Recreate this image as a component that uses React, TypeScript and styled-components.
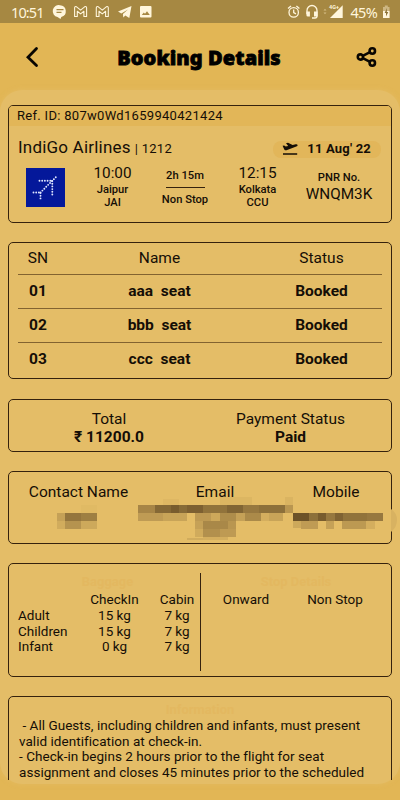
import React from "react";
import styled, { createGlobalStyle } from "styled-components";

const Global = createGlobalStyle`
  * { box-sizing: border-box; }
  body { margin: 0; background: #e2b655; }
`;

const Screen = styled.div`
  width: 400px;
  height: 800px;
  overflow: hidden;
  display: flex;
  flex-direction: column;
  background: #e2b655;
  color: #150e06;
  font-family: Roboto, "Noto Sans", sans-serif;
`;

const StatusBar = styled.div`
  height: 23px;
  flex: none;
  display: flex;
  justify-content: space-between;
  background: #a68842;
  color: #fff6dc;
`;

const Clock = styled.span<{ $spacing: number }>`
  font: 14.5px/25px "Noto Sans", sans-serif;
  letter-spacing: ${(p) => p.$spacing}px;
`;

const StatusGroup = styled.div<{ $left?: number; $right?: number; $gap: number }>`
  display: flex;
  gap: ${(p) => p.$gap}px;
  padding: 0 ${(p) => p.$right ?? 0}px 0 ${(p) => p.$left ?? 0}px;
`;

const Icon = styled.svg`
  display: block;
  flex: none;
`;

const Header = styled.header`
  height: 67px;
  flex: none;
  display: grid;
  grid-template-columns: 64px 1fr 66px;
  align-items: center;
  justify-items: center;
`;

const Title = styled.h1`
  margin: 0;
  padding-top: 2px;
  font: 900 20px/30px "Noto Sans", sans-serif;
  letter-spacing: 0.1px;
  color: #000;
  -webkit-text-stroke: 0.8px #000;
  white-space: nowrap;
`;

const Panel = styled.main`
  height: 694px;
  flex: none;
  padding: 15px 0 4px;
  border-radius: 22px;
  background: #e4bd67;
  box-shadow: 0 0 5px rgba(228, 189, 103, 0.7);
`;

const Scroll = styled.div`
  height: 675px;
  padding: 0 8px;
  overflow: hidden;
  display: flex;
  flex-direction: column;
`;

const Card = styled.section<{ $h: number; $gap?: number }>`
  position: relative;
  flex: none;
  height: ${(p) => p.$h}px;
  margin-bottom: ${(p) => p.$gap ?? 19}px;
  border: 1px solid #35220d;
  border-radius: 5px;
`;

const Text = styled.div<{ $size?: number; $bold?: number; $line?: number; $spacing?: number; $align?: string }>`
  font-size: ${(p) => p.$size ?? 15.5}px;
  font-weight: ${(p) => p.$bold ?? 400};
  line-height: ${(p) => p.$line ?? 18}px;
  letter-spacing: ${(p) => p.$spacing ?? 0}px;
  text-align: ${(p) => p.$align ?? "center"};
  white-space: pre;
`;

const Small = styled(Text)`
  font-size: 11.2px;
  font-weight: 500;
`;

const RefBand = styled.div`
  height: 20px;
  padding-left: 8px;
  background: #e2b658;
  border-radius: 4px 4px 0 0;
`;

const AirlineRow = styled.div`
  display: flex;
  justify-content: space-between;
  align-items: center;
  height: 20px;
  margin-top: 12px;
  padding: 0 10px 0 9px;
`;

const AirlineName = styled.div`
  display: flex;
  align-items: baseline;
  gap: 4px;
`;

const DateChip = styled.div`
  display: flex;
  align-items: center;
  gap: 8px;
  height: 17px;
  padding: 0 10px 0 9px;
  margin-top: 2px;
  border-radius: 8px;
  background: #e2b65a;
`;

const FlightRow = styled.div`
  display: grid;
  grid-template-columns: 56px 79px 66px 79px 84px;
  padding: 1px 0 0 8px;
`;

const LogoCell = styled.div`
  padding: 9px 0 0 8.6px;
`;

const Stack = styled.div<{ $top?: number }>`
  padding-top: ${(p) => p.$top ?? 0}px;
  display: flex;
  flex-direction: column;
  align-items: center;
`;

const DurationRule = styled.div`
  width: 39px;
  height: 1px;
  margin: 4px 0;
  background: #35220d;
`;

const Row = styled.div<{ $h: number; $ruled?: boolean }>`
  display: grid;
  grid-template-columns: 40px 203px 121px;
  align-items: center;
  height: ${(p) => p.$h}px;
  margin: 0 9px;
  padding-bottom: 1.5px;
  border-bottom: ${(p) => (p.$ruled ? "1px solid #826330" : "none")};
`;

const Split = styled.div<{ $cols: string; $top: number }>`
  display: grid;
  grid-template-columns: ${(p) => p.$cols};
  padding-top: ${(p) => p.$top}px;
`;

const Mosaic = styled.svg`
  position: absolute;
  left: -9px;
  top: 21px;
  overflow: visible;
`;

const Half = styled.div<{ $divider?: boolean }>`
  height: 98px;
  border-right: ${(p) => (p.$divider ? "1px solid #35220d" : "none")};
`;

const Faint = styled(Text)`
  color: #e3b860;
  font-weight: 700;
`;

const Grid = styled.div<{ $cols: string }>`
  display: grid;
  grid-template-columns: ${(p) => p.$cols};
`;

const BaggageTitle = styled.div`
  padding-left: 6px;
`;

const Info = styled.div`
  padding-left: 10px;
`;

const passengers = [
  ["01", "aaa  seat", "Booked"],
  ["02", "bbb  seat", "Booked"],
  ["03", "ccc  seat", "Booked"],
];

const baggage = [
  ["Adult", "15 kg", "7 kg"],
  ["Children", "15 kg", "7 kg"],
  ["Infant", "0 kg", "7 kg"],
];

const infoLines = [
  " - All Guests, including children and infants, must present",
  "valid identification at check-in.",
  "- Check-in begins 2 hours prior to the flight for seat",
  "assignment and closes 45 minutes prior to the scheduled",
];

// x, y, width, height, opacity of each redaction block
const blocks: number[][] = [
  [57, 20, 8, 8, 0.2], [65, 20, 16, 8, 0.52], [81, 20, 16, 8, 0.45], [81, 12, 16, 8, 0.02],
  [57, 28, 8, 8, 0.12], [65, 28, 16, 8, 0.3], [81, 28, 16, 8, 0.14],
  [138, 12, 17, 8, 0.4], [155, 12, 16, 8, 0.62], [171, 12, 8, 8, 0.7], [179, 12, 8, 8, 0.6],
  [187, 12, 16, 8, 0.67], [203, 12, 24, 8, 0.54], [227, 12, 16, 8, 0.64], [243, 12, 16, 8, 0.5],
  [259, 12, 26, 8, 0.56], [285, 12, 8, 8, 0.28], [163, 6, 16, 6, 0.04], [220, 4, 32, 8, 0.05], [285, 4, 8, 8, 0.06],
  [138, 20, 25, 8, 0.24], [163, 20, 24, 8, 0.18], [195, 20, 16, 8, 0.25], [211, 20, 9, 8, 0.15],
  [220, 20, 16, 8, 0.35], [236, 20, 9, 8, 0.2], [245, 20, 16, 8, 0.37], [261, 20, 8, 8, 0.1], [269, 20, 14, 8, 0.18],
  [195, 28, 8, 8, 0.2], [203, 28, 25, 8, 0.38], [228, 28, 8, 8, 0.28],
  [195, 36, 8, 8, 0.13], [203, 36, 17, 8, 0.32], [220, 36, 16, 8, 0.25], [187, 45, 16, 2, 0.12], [203, 44, 25, 3, 0.1],
  [293, 20, 16, 8, 0.78], [309, 20, 9, 8, 0.56], [318, 20, 8, 8, 0.7], [326, 20, 9, 8, 0.5],
  [335, 20, 8, 8, 0.65], [343, 20, 24, 8, 0.54], [367, 20, 16, 8, 0.5],
  [301, 28, 17, 8, 0.24], [326, 28, 8, 8, 0.2], [342, 28, 24, 8, 0.26], [293, 28, 8, 7, 0.14], [366, 28, 9, 8, 0.1],
];

const DotPlane = () => (
  <Icon width="39" height="39" viewBox="0 0 39 39">
    <rect width="39" height="39" fill="#04189a" />
    <g stroke="#dfe6ff" strokeWidth="1.9" strokeLinecap="round" strokeDasharray="0 2.7" fill="none">
      <path d="M13.5 12.8H27" />
      <path d="M14.5 24.5 31.5 7.5" />
      <path d="M26.3 13V27" />
      <path d="M7.5 24.5H15" />
      <path d="M14.5 25V32" />
    </g>
  </Icon>
);

const NotificationIcons = () => (
  <Icon width="112" height="23" viewBox="0 0 112 23">
    <g fill="#fff6dc">
      <path d="M13 5.2a6 6 0 0 1 1.3 11.8L13.5 19l-3-2A5.9 5.9 0 0 1 13 5.2z" />
      <path d="M71 11.5 84.5 6l-2.2 12-4-2.6-2 2-.4-3.3L81 9.5l-6.7 4.1z" />
      <path fillRule="evenodd" d="M94 6h9.5q1 0 1 1v9.5q0 1-1 1H94q-1 0-1-1V7q0-1 1-1zm.8 9h8l-2.8-3.8-2 2.5-1.2-1.3z" />
    </g>
    <path d="M9.5 9.7h7M9.5 12.3h5" stroke="#a68842" strokeWidth="1.2" />
    <g fill="none" stroke="#fff6dc" strokeWidth="1.1" strokeLinejoin="round">
      <path d="M27.6 16.5V8q0-2 2-1.2l4 3.3 4-3.3q2-.8 2 1.2v8.5h-2.7v-5.2l-3.3 2.6-3.3-2.6v5.2z" />
      <path d="M49.3 16.5V8q0-2 2-1.2l4 3.3 4-3.3q2-.8 2 1.2v8.5h-2.7v-5.2l-3.3 2.6-3.3-2.6v5.2z" />
    </g>
  </Icon>
);

const SystemIcons = () => (
  <Icon width="58" height="23" viewBox="288 0 58 23">
    <g fill="none" stroke="#fff6dc" strokeWidth="1.3">
      <circle cx="294.7" cy="12.4" r="4.7" />
      <path d="M294.7 9.5v3.2l2.3 1.2M289 8.5l3-2.5M300.4 8.5l-3-2.5" />
      <path d="M308 14v-3.5a5 5 0 0 1 10 0V16q0 2-2 2h-3" />
    </g>
    <path d="M307.4 11.5h3.5v5h-2q-1.5 0-1.5-1.5zM315 11.5h3.6v5H315zM331 18l12.7-12.7V18z" fill="#fff6dc" />
    <path d="M324.5 10.5 326 8.7l1.5 1.8zM324.5 12.5l1.5 1.8 1.5-1.8z" fill="#d3bc83" />
    <text x="330" y="9" fontSize="5.5" fontWeight="700" fontFamily="Roboto" fill="#fff6dc">4G+</text>
  </Icon>
);

const Battery = () => (
  <Icon width="9" height="23" viewBox="0 0 9 23">
    <path d="M2.8 5.5h3V7h1.7v4H1V7h1.8z" fill="#cdb783" />
    <path d="M1 11h6.6v7H1z" fill="#fff6dc" />
    <path d="M5 8 2.6 13H4v3.5L6.3 12H4.8z" fill="#8d7236" />
  </Icon>
);

const BackIcon = () => (
  <Icon width="14" height="22" viewBox="0 0 14 22">
    <path d="M11.5 2.5 3 11.2l8.5 8.3" fill="none" stroke="#090602" strokeWidth="2.8" strokeLinecap="round" />
  </Icon>
);

const ShareIcon = () => (
  <Icon width="22" height="22" viewBox="0 0 22 22">
    <g fill="none" stroke="#090602" strokeWidth="2.6">
      <circle cx="4.4" cy="11" r="2.6" />
      <circle cx="16.3" cy="5" r="2.7" />
      <circle cx="16.3" cy="17" r="2.7" />
      <path d="m6.8 9.8 7.2-3.6M6.8 12.2l7.2 3.6" />
    </g>
  </Icon>
);

const TakeoffIcon = () => (
  <Icon width="17" height="14" viewBox="0 0 17 14">
    <path d="M1 11.3h14.2v1.5H1zM.6 3.8 2.2 3.4l1.5 1.2 2.5-.5L4 1.2 6 .8l4.6 2.3 3.1-.9q1.6-.3 1.9.8.2 1.2-1.3 1.6L4.5 8.3Q3 8.6 2.3 7.4z" fill="#150e06" />
  </Icon>
);

export default function App() {
  return (
    <Screen>
      <Global />
      <StatusBar>
        <StatusGroup $left={11} $gap={3}>
          <Clock $spacing={-0.9}>10:51</Clock>
          <NotificationIcons />
        </StatusGroup>
        <StatusGroup $right={9} $gap={5}>
          <SystemIcons />
          <Clock $spacing={-0.7}>45%</Clock>
          <Battery />
        </StatusGroup>
      </StatusBar>
      <Header>
        <BackIcon />
        <Title>Booking Details</Title>
        <ShareIcon />
      </Header>
      <Panel>
        <Scroll>
          <Card $h={118}>
            <RefBand>
              <Text $size={13} $line={20} $spacing={0.3} $align="left">Ref. ID: 807w0Wd1659940421424</Text>
            </RefBand>
            <AirlineRow>
              <AirlineName>
                <Text $size={17} $spacing={0.2}>IndiGo Airlines</Text>
                <Text $size={13} $spacing={0.3}>| 1212</Text>
              </AirlineName>
              <DateChip>
                <TakeoffIcon />
                <Text $size={13} $bold={700} $spacing={0.2}>11 Aug' 22</Text>
              </DateChip>
            </AirlineRow>
            <FlightRow>
              <LogoCell><DotPlane /></LogoCell>
              <Stack $top={5}>
                <Text $size={15.3} $line={19}>10:00</Text>
                <Small $line={13}>Jaipur</Small>
                <Small $line={13}>JAI</Small>
              </Stack>
              <Stack $top={9}>
                <Small $line={15}>2h 15m</Small>
                <DurationRule />
                <Small $line={15}>Non Stop</Small>
              </Stack>
              <Stack $top={5}>
                <Text $size={15.3} $line={19}>12:15</Text>
                <Small $line={13}>Kolkata</Small>
                <Small $line={13}>CCU</Small>
              </Stack>
              <Stack $top={11}>
                <Small $line={15}>PNR No.</Small>
                <Text $size={15.3} $line={18}>WNQM3K</Text>
              </Stack>
            </FlightRow>
          </Card>

          <Card $h={137} $gap={20}>
            <Row $h={32} $ruled>
              <Text>SN</Text>
              <Text>Name</Text>
              <Text>Status</Text>
            </Row>
            {passengers.map(([sn, name, status], i) => (
              <Row key={sn} $h={34} $ruled={i < 2}>
                <Text $bold={700}>{sn}</Text>
                <Text $bold={700}>{name}</Text>
                <Text $bold={700}>{status}</Text>
              </Row>
            ))}
          </Card>

          <Card $h={53}>
            <Split $cols="200px 163px" $top={10}>
              <Text>Total</Text>
              <Text>Payment Status</Text>
              <Text $bold={700}>₹ 11200.0</Text>
              <Text $bold={700}>Paid</Text>
            </Split>
          </Card>

          <Card $h={73}>
            <Split $cols="139px 134px 108px" $top={11}>
              <Text>Contact Name</Text>
              <Text>Email</Text>
              <Text>Mobile</Text>
            </Split>
            <Mosaic width="400" height="50" viewBox="0 0 400 50">
              {blocks.map(([x, y, w, h, o], i) => (
                <rect key={i} x={x} y={y} width={w} height={h} fill="#4a3317" opacity={o} />
              ))}
              <path d="M391 16q6 4 6 11t-6 12z" fill="#d8b261" />
            </Mosaic>
          </Card>

          <Card $h={114}>
            <Split $cols="192px 190px" $top={9}>
              <Half $divider>
                <BaggageTitle>
                  <Faint $size={13} $line={17}>Baggage</Faint>
                </BaggageTitle>
                <Grid $cols="9px 63px 67px 58px">
                  <span />
                  <Text $size={13.5} $line={18} />
                  <Text $size={13.5} $line={18}>CheckIn</Text>
                  <Text $size={13.5} $line={18}>Cabin</Text>
                  {baggage.map(([who, checkIn, cabin]) => (
                    <React.Fragment key={who}>
                      <span />
                      <Text $size={13.5} $line={15.6} $align="left">{who}</Text>
                      <Text $size={13.5} $line={15.6}>{checkIn}</Text>
                      <Text $size={13.5} $line={15.6}>{cabin}</Text>
                    </React.Fragment>
                  ))}
                </Grid>
              </Half>
              <Half>
                <Faint $size={13} $line={17}>Stop Details</Faint>
                <Grid $cols="90px 88px">
                  <Text $size={13.5} $line={18}>Onward</Text>
                  <Text $size={13.5} $line={18}>Non Stop</Text>
                </Grid>
              </Half>
            </Split>
          </Card>

          <Card $h={140}>
            <Split $cols="382px" $top={4}>
              <Faint $size={13} $line={17}>Information</Faint>
            </Split>
            <Info>
              {infoLines.map((line) => (
                <Text key={line} $size={13.5} $line={15.6} $spacing={0.04} $align="left">{line}</Text>
              ))}
            </Info>
          </Card>
        </Scroll>
      </Panel>
    </Screen>
  );
}
